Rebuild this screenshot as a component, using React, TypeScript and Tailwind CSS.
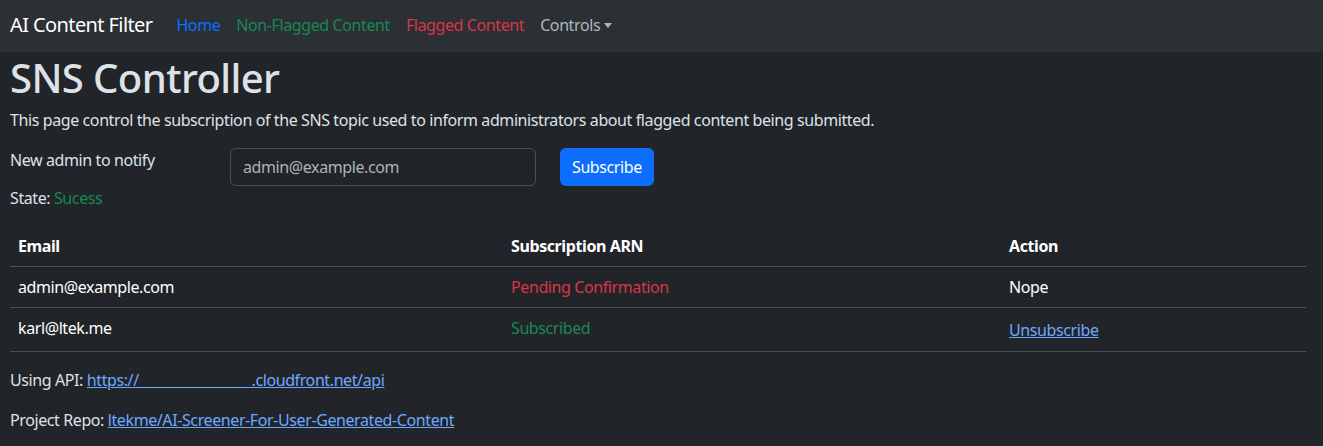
export default function App() {
  return (
    <div className="min-h-screen bg-[#212529] text-[#dee2e6] font-['Noto_Sans',sans-serif] text-[16px] leading-[24px] tracking-[-0.4px]">
      {/* navbar */}
      <nav className="h-[52px] bg-[#2b3035] flex items-center px-[10px]">
        <span className="text-[20px] text-white mr-[16px] -mt-[2px] tracking-[-0.6px]">AI Content Filter</span>
        <div className="flex items-center -mt-[2px]">
          <a className="px-[8px] text-[#0d6efd]">Home</a>
          <a className="px-[8px] text-[#198754]">Non-Flagged Content</a>
          <a className="px-[8px] text-[#dc3545]">Flagged Content</a>
          <a className="px-[8px] text-[#dee2e6]/75 flex items-center">
            Controls
            <span className="ml-[4px] inline-block w-0 h-0 border-x-[4px] border-x-transparent border-t-[5px] border-t-current" />
          </a>
        </div>
      </nav>

      <div className="px-[10px]">
        <h1 className="text-[40px] leading-[48px] font-medium tracking-[-0.6px] mt-[2px] mb-[6px]">SNS Controller</h1>
        <p className="mb-[16px]">
          This page control the subscription of the SNS topic used to inform administrators about flagged content being submitted.
        </p>

        {/* subscribe form */}
        <div className="flex items-start">
          <div className="w-[220px]">
            <div>New admin to notify</div>
            <div className="mt-[14px]">
              State: <span className="text-[#198754]">Sucess</span>
            </div>
          </div>
          <input
            className="w-[306px] h-[38px] px-[12px] rounded-[6px] border border-[#495057] bg-[#212529] text-[#dee2e6] placeholder:text-[#dee2e6]/75 outline-none"
            placeholder="admin@example.com"
          />
          <button className="ml-[24px] h-[38px] px-[12px] rounded-[6px] bg-[#0d6efd] text-white">Subscribe</button>
        </div>

        {/* subscriptions table */}
        <table className="w-[1296px] mt-[16px] border-collapse">
          <thead>
            <tr className="border-b border-[#495057]">
              <th className="text-left font-bold text-white px-[8px] py-[8px] w-[493px]">Email</th>
              <th className="text-left font-bold text-white px-[8px] py-[8px] w-[498px]">Subscription ARN</th>
              <th className="text-left font-bold text-white px-[8px] py-[8px]">Action</th>
            </tr>
          </thead>
          <tbody>
            <tr className="border-b border-[#495057]">
              <td className="px-[8px] py-[8px] text-white">admin@example.com</td>
              <td className="px-[8px] py-[8px] text-[#dc3545]">Pending Confirmation</td>
              <td className="px-[8px] py-[8px] text-white">Nope</td>
            </tr>
            <tr className="border-b border-[#495057]">
              <td className="px-[8px] py-[8px] text-white align-top">karl@ltek.me</td>
              <td className="px-[8px] py-[8px] text-[#198754] align-top">Subscribed</td>
              <td className="px-[8px] pt-[10px] pb-[9px] align-top">
                <a className="text-[#6ea8fe] underline">Unsubscribe</a>
              </td>
            </tr>
          </tbody>
        </table>

        {/* footer */}
        <p className="mt-[16px]">
          Using API: <a className="text-[#6ea8fe] underline">https://&nbsp;&nbsp;&nbsp;&nbsp;&nbsp;&nbsp;&nbsp;&nbsp;&nbsp;&nbsp;&nbsp;&nbsp;&nbsp;&nbsp;&nbsp;&nbsp;&nbsp;&nbsp;&nbsp;&nbsp;&nbsp;&nbsp;&nbsp;&nbsp;&nbsp;&nbsp;&nbsp;&nbsp;&nbsp;&nbsp;.cloudfront.net/api</a>
        </p>
        <p className="mt-[16px]">
          Project Repo: <a className="text-[#6ea8fe] underline">ltekme/AI-Screener-For-User-Generated-Content</a>
        </p>
      </div>
    </div>
  )
}
